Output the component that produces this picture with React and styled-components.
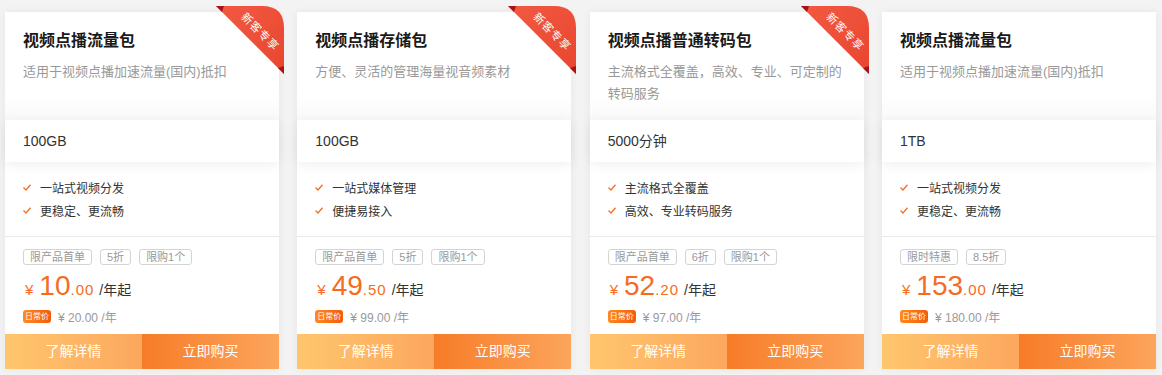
import styled, { createGlobalStyle } from "styled-components";

const GlobalStyle = createGlobalStyle`
  html, body {
    margin: 0;
    padding: 0;
    background: #f3f3f3;
    font-family: "Liberation Sans", "Noto Sans CJK SC", sans-serif;
  }
`;

const products = [
    {
        title: "视频点播流量包",
        desc: "适用于视频点播加速流量(国内)抵扣",
        spec: "100GB",
        features: ["一站式视频分发", "更稳定、更流畅"],
        tags: ["限产品首单", "5折", "限购1个"],
        price: "10",
        cents: ".00",
        daily: "¥ 20.00 /年",
        ribbon: true
    },
    {
        title: "视频点播存储包",
        desc: "方便、灵活的管理海量视音频素材",
        spec: "100GB",
        features: ["一站式媒体管理", "便捷易接入"],
        tags: ["限产品首单", "5折", "限购1个"],
        price: "49",
        cents: ".50",
        daily: "¥ 99.00 /年",
        ribbon: true
    },
    {
        title: "视频点播普通转码包",
        desc: "主流格式全覆盖，高效、专业、可定制的转码服务",
        spec: "5000分钟",
        features: ["主流格式全覆盖", "高效、专业转码服务"],
        tags: ["限产品首单", "6折", "限购1个"],
        price: "52",
        cents: ".20",
        daily: "¥ 97.00 /年",
        ribbon: true
    },
    {
        title: "视频点播流量包",
        desc: "适用于视频点播加速流量(国内)抵扣",
        spec: "1TB",
        features: ["一站式视频分发", "更稳定、更流畅"],
        tags: ["限时特惠", "8.5折"],
        price: "153",
        cents: ".00",
        daily: "¥ 180.00 /年",
        ribbon: false
    }
];

const Page = styled.div`
  display: grid;
  grid-template-columns: repeat(4, 1fr);
  column-gap: 18.33px;
  padding: 12px 6px 6px 5px;
`;

const Card = styled.div`
  position: relative;
  display: flex;
  flex-direction: column;
  height: 357px;
  background: #fff;
  box-shadow: 0 0 8px rgba(0, 0, 0, 0.06);
`;

const Header = styled.div`
  height: 108px;
  box-sizing: border-box;
  padding: 18px 18px 0;
  background: linear-gradient(#fff 75%, #fafafa);
`;

const Title = styled.div`
  font-size: 16px;
  line-height: 22px;
  font-weight: bold;
  color: #1a1a1a;
`;

const Desc = styled.div`
  margin-top: 9px;
  font-size: 13px;
  line-height: 22px;
  color: #999;
`;

const Spec = styled.div`
  position: relative;
  z-index: 1;
  height: 42px;
  line-height: 42px;
  padding: 0 18px;
  font-size: 14px;
  color: #333;
  background: #fff;
  box-shadow: 0 2px 12px rgba(0, 0, 0, 0.07);
`;

const Features = styled.ul`
  list-style: none;
  margin: 0;
  padding: 14px 18px 14px;
  border-bottom: 1px solid #e9e9e9;
`;

const Feature = styled.li`
  display: flex;
  align-items: center;
  gap: 9px;
  height: 23px;
  font-size: 12px;
  color: #333;
`;

const PriceBlock = styled.div`
  flex: 1;
  padding: 12px 18px 0;
`;

const Tags = styled.div`
  display: flex;
  gap: 8px;
`;

const Tag = styled.span`
  height: 16px;
  box-sizing: border-box;
  line-height: 14px;
  padding: 0 6px;
  border: 1px solid #d4d4d4;
  border-radius: 3px;
  font-size: 11px;
  color: #999;
`;

const PriceRow = styled.div`
  display: flex;
  align-items: baseline;
  height: 30px;
  line-height: 30px;
  margin-top: 6px;
  color: #f56b23;
`;

const Yen = styled.span`
  font-size: 15px;
  margin: 0 6px 0 2px;
`;

const Big = styled.span`
  font-size: 28px;
`;

const Cents = styled.span`
  font-size: 15px;
  letter-spacing: 1px;
`;

const Unit = styled.span`
  margin-left: 5px;
  font-size: 14px;
  color: #333;
`;

const DailyRow = styled.div`
  display: flex;
  align-items: center;
  gap: 7px;
  margin-top: 7px;
`;

const Badge = styled.span`
  height: 13px;
  line-height: 13px;
  padding: 0 2px;
  border-radius: 3px;
  font-size: 8px;
  color: #fff;
  background: linear-gradient(90deg, #fe8a1f, #f25c0d);
`;

const DailyText = styled.span`
  font-size: 12px;
  color: #999;
`;

const Buttons = styled.div`
  display: grid;
  grid-template-columns: 1fr 1fr;
  height: 35px;
`;

const Button = styled.div`
  line-height: 35px;
  text-align: center;
  font-size: 14px;
  color: #fff;
  background: ${(props) =>
        props.primary
            ? "linear-gradient(90deg, #f77c28, #fca55d)"
            : "linear-gradient(90deg, #ffc66d, #fca75e)"};
`;

const RibbonBox = styled.svg`
  position: absolute;
  top: -6px;
  right: -5px;
  width: 72px;
  height: 72px;
`;

const Ribbon = ({ id }) => (
    <RibbonBox viewBox="0 0 72 72">
        <defs>
            <linearGradient id={id} x1="0" y1="0" x2="1" y2="1">
                <stop offset="0" stopColor="#f25a41" />
                <stop offset="1" stopColor="#e9452f" />
            </linearGradient>
        </defs>
        <path d="M4 0 H50 Q72 0 72 22 V68 Z" fill={`url(#${id})`} />
        <polygon points="4,0 12,0 10,6" fill="#a5141a" />
        <polygon points="72,68 72,60 66,62" fill="#a5141a" />
        <text
            x="49"
            y="25"
            transform="rotate(45 49 25)"
            textAnchor="middle"
            dominantBaseline="central"
            fontSize="11"
            fill="#fff"
            letterSpacing="1"
            fontFamily="Noto Sans CJK SC, sans-serif"
        >
            新客专享
        </text>
    </RibbonBox>
);

const Check = () => (
    <svg width="8" height="7" viewBox="0 0 8 7">
        <polyline points="0.5,3.5 3,6 7.5,0.8" fill="none" stroke="#f36f21" strokeWidth="1.3" />
    </svg>
);

const App = () => {
    return (
        <Page>
            <GlobalStyle />
            {products.map((p, i) => (
                <Card key={i}>
                    {p.ribbon && <Ribbon id={`rb${i}`} />}
                    <Header>
                        <Title>{p.title}</Title>
                        <Desc>{p.desc}</Desc>
                    </Header>
                    <Spec>{p.spec}</Spec>
                    <Features>
                        {p.features.map((f) => (
                            <Feature key={f}>
                                <Check />
                                {f}
                            </Feature>
                        ))}
                    </Features>
                    <PriceBlock>
                        <Tags>
                            {p.tags.map((t) => (
                                <Tag key={t}>{t}</Tag>
                            ))}
                        </Tags>
                        <PriceRow>
                            <Yen>¥</Yen>
                            <Big>{p.price}</Big>
                            <Cents>{p.cents}</Cents>
                            <Unit>/年起</Unit>
                        </PriceRow>
                        <DailyRow>
                            <Badge>日常价</Badge>
                            <DailyText>{p.daily}</DailyText>
                        </DailyRow>
                    </PriceBlock>
                    <Buttons>
                        <Button>了解详情</Button>
                        <Button primary>立即购买</Button>
                    </Buttons>
                </Card>
            ))}
        </Page>
    );
};

export default App;
